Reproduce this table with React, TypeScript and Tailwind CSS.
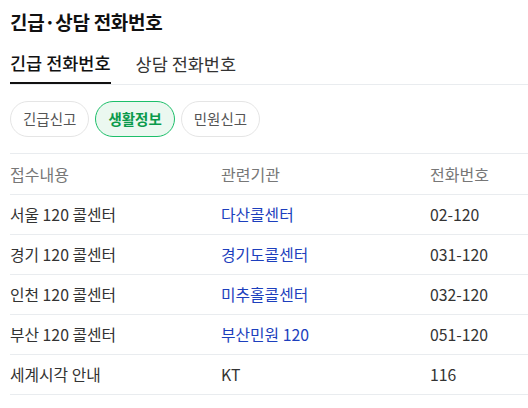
import React from "react";

const rows: { a: string; b: string; link: boolean; c: string }[] = [
  { a: "서울 120 콜센터", b: "다산콜센터", link: true, c: "02-120" },
  { a: "경기 120 콜센터", b: "경기도콜센터", link: true, c: "031-120" },
  { a: "인천 120 콜센터", b: "미추홀콜센터", link: true, c: "032-120" },
  { a: "부산 120 콜센터", b: "부산민원 120", link: true, c: "051-120" },
  { a: "세계시각 안내", b: "KT", link: false, c: "116" },
];

export default function App() {
  return (
    <div
      className="w-[528px] h-[408px] bg-white pl-[10px] overflow-hidden text-[#333]"
      style={{ fontFamily: '"Noto Sans CJK KR", "Noto Sans", sans-serif' }}
    >
      <div className="h-[44px] flex items-center">
        <h1 className="text-[19px] font-bold text-[#111] tracking-[-0.3px]">긴급·상담 전화번호</h1>
      </div>
      <div className="flex gap-[25px] border-b border-[#e9ecef] h-[41px]">
        <div className="h-[40px] flex items-center border-b-2 border-[#111] text-[17.5px] text-[#111] font-medium">
          긴급 전화번호
        </div>
        <div className="h-[40px] flex items-center text-[17.5px] text-[#333]">상담 전화번호</div>
      </div>
      <div className="flex gap-[6px] mt-[16px]">
        <div className="h-[36px] px-3 flex items-center rounded-full border border-[#e5e5e5] text-[14.5px] text-[#555]">
          긴급신고
        </div>
        <div className="h-[36px] px-3 flex items-center rounded-full border border-[#1dbf6a] bg-[#ebf8f0] text-[14.5px] text-[#0a9a4b] font-bold">
          생활정보
        </div>
        <div className="h-[36px] px-3 flex items-center rounded-full border border-[#e5e5e5] text-[14.5px] text-[#555]">
          민원신고
        </div>
      </div>
      <div className="mt-[16px] border-t border-[#e9ecef]">
        <div className="grid grid-cols-[211px_209px_1fr] h-[41px] items-center border-b border-[#e9ecef] text-[16px] text-[#777]">
          <div>접수내용</div>
          <div>관련기관</div>
          <div>전화번호</div>
        </div>
        {rows.map((r) => (
          <div
            key={r.a}
            className="grid grid-cols-[211px_209px_1fr] h-[40px] items-center border-b border-[#e9ecef] text-[15.8px]"
          >
            <div className="text-[#333]">{r.a}</div>
            <div className={r.link ? "text-[#1d3fbd]" : "text-[#333]"}>{r.b}</div>
            <div className="text-[#333]">{r.c}</div>
          </div>
        ))}
      </div>
    </div>
  );
}
